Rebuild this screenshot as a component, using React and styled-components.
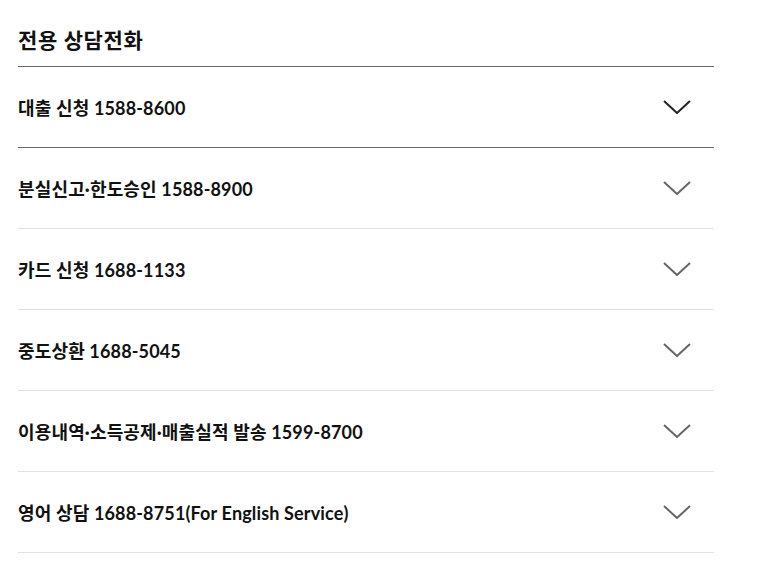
import React from 'react';
import styled, { createGlobalStyle } from 'styled-components';

const GlobalStyle = createGlobalStyle`
  body {
    margin: 0;
    background: #fff;
    font-family: Lato, "Noto Sans CJK KR", sans-serif;
    color: #111;
  }
`;

const Wrap = styled.section`
  width: 696px;
  padding: 0 0 0 18px;
`;

const Title = styled.h2`
  margin: 0;
  height: 67px;
  box-sizing: border-box;
  padding-top: 25px;
  font-size: 21px;
  font-weight: 600;
  line-height: 30px;
  letter-spacing: 0.6px;
  border-bottom: 1px solid #666;
`;

const List = styled.ul`
  list-style: none;
  margin: 0;
  padding: 0;
`;

const Row = styled.li`
  height: 80px;
  display: flex;
  align-items: center;
  justify-content: space-between;
  border-bottom: 1px solid ${(p) => (p.$open ? '#666' : '#e0e0e0')};
`;

const Label = styled.span`
  font-size: 18px;
  font-weight: 700;
  letter-spacing: 0.15px;
  color: #111;
`;

const Toggle = styled.span`
  display: flex;
  width: 28px;
  height: 14px;
  margin-right: 23px;
  color: ${(p) => (p.$open ? '#222' : '#666')};
`;

const Chevron = ({ open }) => (
  <Toggle $open={open}>
    <svg width="28" height="14" viewBox="0 0 28 14" fill="none">
      <path d="M1 1 L14 13 L27 1" stroke="currentColor" strokeWidth="2" />
    </svg>
  </Toggle>
);

const items = [
  '대출 신청 1588-8600',
  '분실신고·한도승인 1588-8900',
  '카드 신청 1688-1133',
  '중도상환 1688-5045',
  '이용내역·소득공제·매출실적 발송 1599-8700',
  '영어 상담 1688-8751(For English Service)',
];

export default function App() {
  return (
    <>
      <GlobalStyle />
      <Wrap>
        <Title>전용 상담전화</Title>
        <List>
          {items.map((t, i) => (
            <Row key={t} $open={i === 0}>
              <Label>{t}</Label>
              <Chevron open={i === 0} />
            </Row>
          ))}
        </List>
      </Wrap>
    </>
  );
}
